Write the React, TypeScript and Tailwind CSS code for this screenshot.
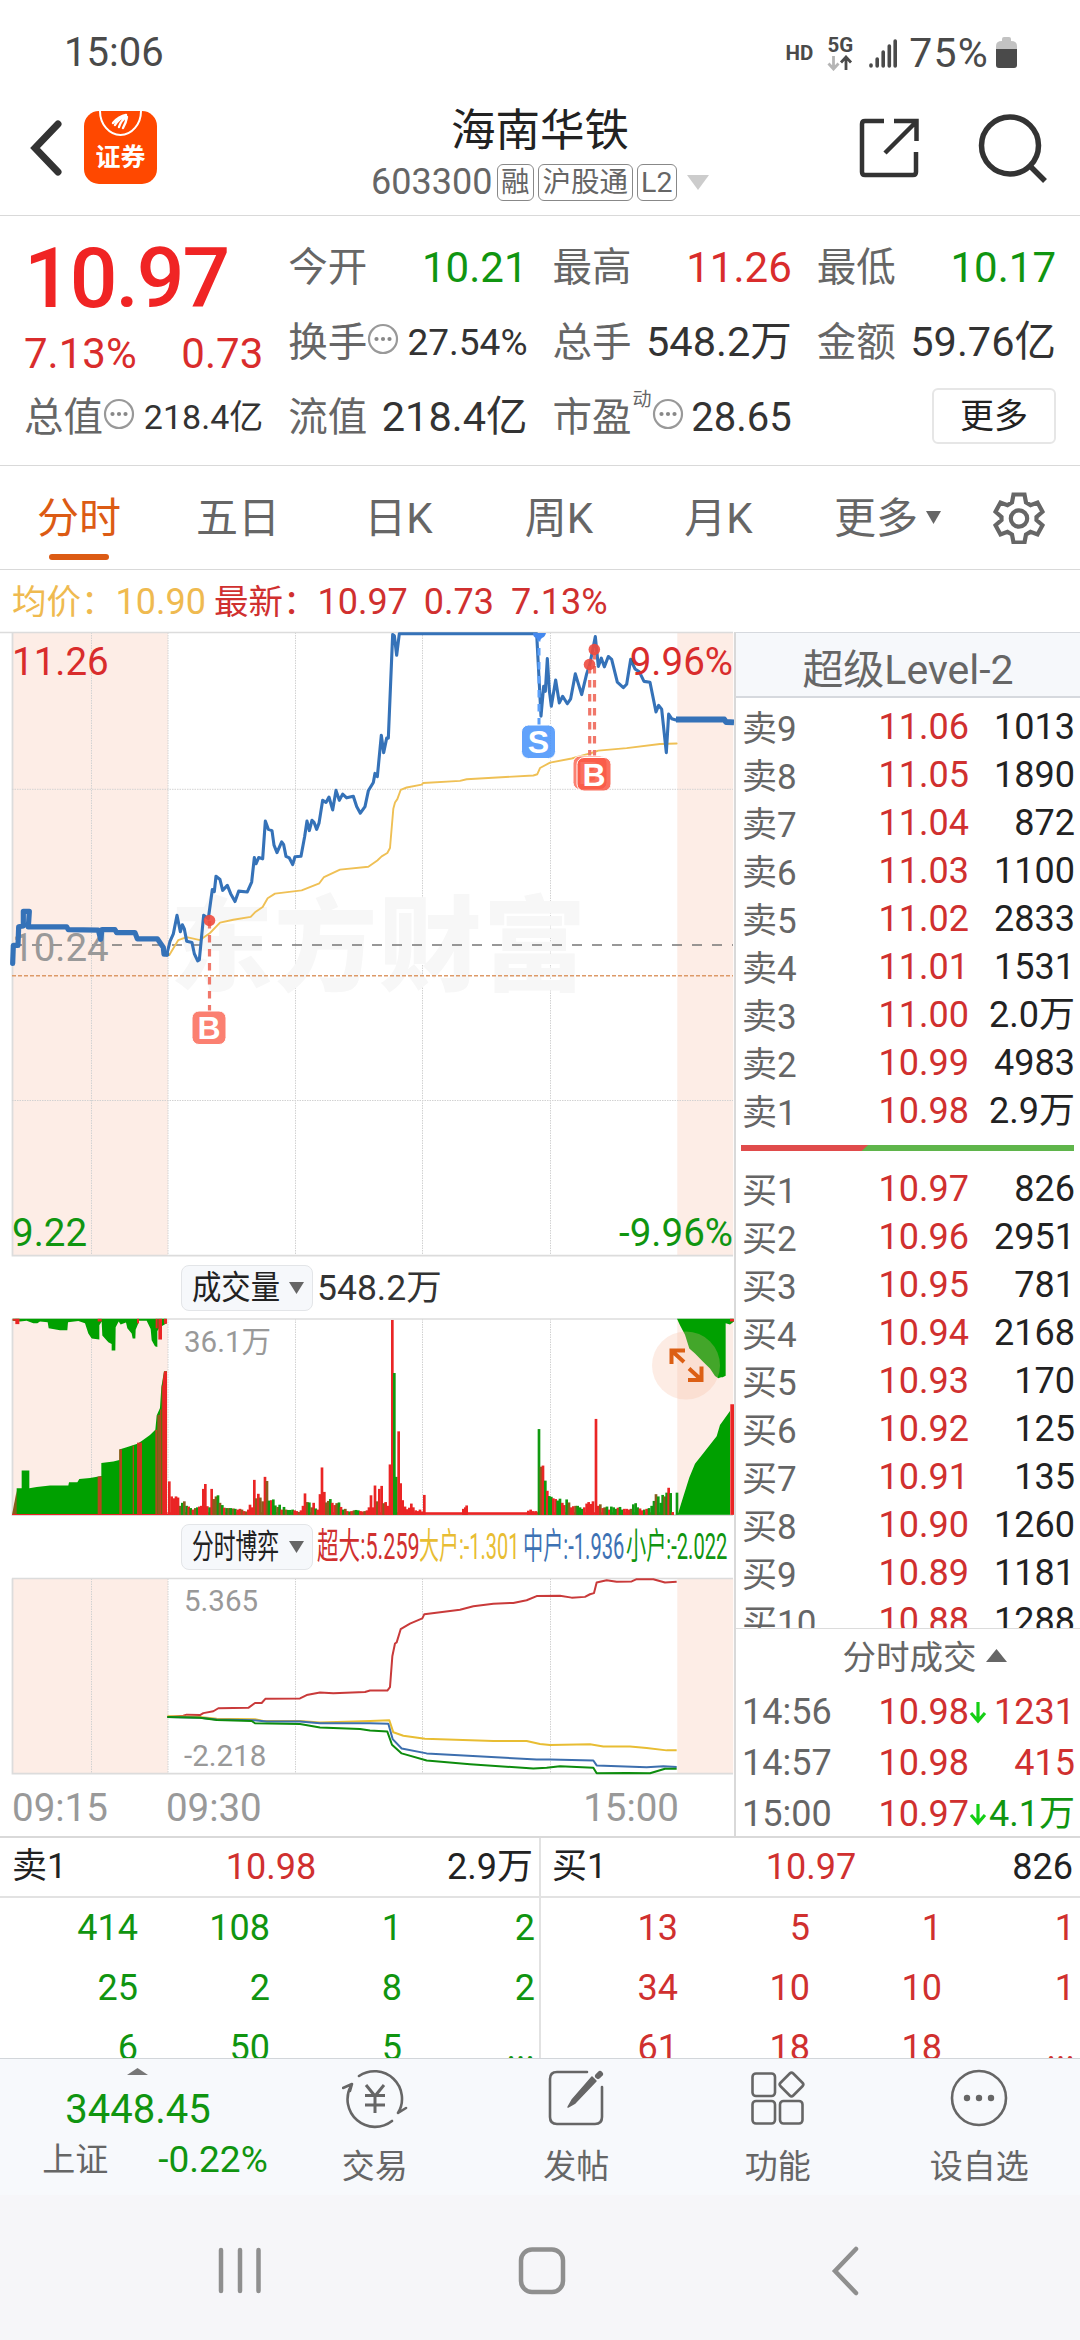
import type { ReactNode } from "react";

const FONT = "font-['Roboto','Noto_Sans_CJK_SC',sans-serif]";

/* ---------- chart data ---------- */

const PRICE_A =
  "500,808 510,775 520,757 531,712 541,752 547,735 553,745 560,775 576,778 583,805 593,822 598,820 611,712 625,720 637,650 643,655 648,618 660,626 668,652 682,640 692,660 705,679 716,654 742,656 755,632 763,573 768,588 776,573 788,576 796,485 805,505 816,508 822,543 831,561 845,535 851,542 858,570 868,574 878,590 885,571 903,570 914,522 921,485 928,508 936,483 942,488 950,505 957,490 968,435 978,440 987,427 998,458 1008,411 1018,435 1028,420 1040,429 1060,425 1070,450 1081,466 1095,450 1105,412 1120,392 1125,370 1132,378 1144,278 1151,320 1160,285 1165,285 1178,35 1183,38 1190,85 1198,33 1610,33 1623,232 1631,160 1636,172 1642,93 1648,170 1654,208 1667,145 1678,200 1688,184 1702,202 1712,190 1726,130 1745,180 1760,130 1770,105 1786,40 1795,112 1804,92 1813,113 1825,88 1835,95 1852,150 1870,163 1880,155 1892,95 1905,118 1918,125 1932,148 1950,150 1968,222 1976,206 1985,215 1999,320 2006,227 2015,238 2028,241";
const PRICE_PRE =
  "38,828 40,785 54,785 56,740 70,738 70,703 88,703 85,740 200,740 205,747 295,748 302,770 306,747 345,747 350,754 405,754 412,769 472,769 490,790 492,806 500,806";
const PRICE_POST = "2028,240 2173,240 2178,246 2202,247";
const AVG =
  "508,808 535,772 560,765 600,772 630,755 660,730 700,723 752,716 765,705 788,692 803,671 825,660 905,652 958,635 972,620 1020,602 1105,595 1132,580 1145,570 1162,562 1170,550 1180,455 1185,440 1192,432 1202,410 1220,404 1265,397 1270,393 1380,388 1400,384 1600,375 1612,372 1620,357 1650,344 1715,334 1770,322 1795,315 1880,309 1980,299 2030,298";

const FLOW_RED =
  "502,1241 550,1238 560,1235 600,1236 610,1231 640,1226 655,1218 745,1217 765,1204 785,1204 796,1193 900,1192 920,1183 960,1176 1000,1178 1095,1175 1110,1171 1162,1171 1170,1162 1177,1080 1185,1046 1190,1043 1202,1008 1230,993 1267,979 1273,968 1380,956 1420,947 1480,940 1540,938 1580,931 1610,920 1680,919 1715,924 1755,922 1770,915 1782,912 1790,884 1820,878 1850,882 1895,881 1910,875 1960,875 1995,884 2030,882";
const FLOW_YELLOW =
  "502,1239 600,1241 650,1246 765,1247 790,1252 900,1252 960,1256 1110,1252 1168,1250 1180,1282 1210,1291 1275,1299 1480,1305 1580,1305 1620,1313 1650,1316 1770,1314 1810,1320 1890,1320 1940,1324 2000,1330 2030,1330";
const FLOW_BLUE =
  "502,1241 600,1243 650,1248 760,1250 800,1253 900,1253 960,1258 1110,1258 1165,1259 1178,1300 1205,1325 1280,1338 1460,1347 1610,1354 1650,1354 1780,1357 1790,1370 1940,1375 1990,1372 2030,1374";
const FLOW_GREEN =
  "502,1241 600,1243 650,1249 755,1252 765,1258 900,1260 960,1269 1080,1273 1110,1277 1162,1280 1176,1315 1205,1338 1280,1357 1410,1367 1600,1378 1640,1376 1680,1372 1780,1376 1790,1391 1880,1390 1950,1391 1995,1379 2030,1379";

const R = "#ea2525";
const G = "#109a10";
const M = "#8a5c1c";

/* each bar: x, top, tone */
const VOLUME =
  "508,615,r 515,655,r 521,660,r 528,655,r 534,658,r 541,680,m 547,672,g 553,668,m 560,680,g 566,682,r 572,686,g 579,690,r 586,686,m 592,684,g 598,682,r 604,680,r 610,635,r 616,622,r 622,681,r 629,684,g 635,635,r 641,662,m 648,655,m 654,652,g 660,672,m 667,678,g 673,685,r 680,686,g 686,686,m 692,686,g 700,687,m 706,688,g 713,690,r 720,688,r 726,690,m 732,694,r 738,695,m 745,690,r 750,677,r 757,684,r 763,611,r 769,660,m 775,648,r 781,658,m 788,668,m 795,603,r 801,614,m 807,666,g 814,665,r 820,663,g 826,679,g 833,683,m 839,677,g 845,690,r 852,683,g 858,690,m 865,691,g 871,691,g 878,690,g 884,692,r 890,694,r 897,696,m 903,692,r 909,680,r 915,647,r 922,670,m 928,671,g 935,684,m 941,672,r 947,687,g 953,690,r 960,649,r 966,578,r 973,643,r 979,671,m 985,667,m 991,662,g 997,672,r 1004,678,r 1010,673,m 1017,671,g 1023,683,r 1030,690,g 1036,688,m 1042,694,r 1049,695,g 1055,694,r 1062,692,m 1068,691,g 1075,692,g 1081,694,r 1087,695,r 1094,694,m 1101,692,r 1107,684,r 1113,652,r 1119,684,r 1125,626,r 1132,668,m 1138,635,r 1145,627,r 1151,673,m 1157,670,r 1164,680,r 1170,570,r 1177,186,r 1183,327,g 1189,603,g 1196,482,r 1202,620,r 1208,665,r 1215,682,r 1221,689,r 1228,685,r 1234,674,r 1240,684,r 1247,692,r 1253,694,r 1260,690,r 1266,695,r 1273,651,r 1390,688,r 1396,684,r 1400,679,r 1585,693,r 1592,690,r 1600,694,r 1608,694,r 1617,476,g 1623,576,m 1629,573,r 1636,613,g 1642,640,r 1648,654,g 1654,656,g 1660,660,r 1667,662,r 1673,666,g 1680,661,g 1687,672,r 1693,678,r 1700,663,g 1707,671,m 1713,684,r 1720,681,r 1727,680,m 1733,680,g 1740,684,g 1746,688,g 1753,684,r 1760,674,r 1766,670,r 1772,675,r 1779,668,r 1788,449,r 1795,680,r 1801,676,m 1808,686,r 1814,684,m 1821,682,g 1828,690,r 1834,682,g 1841,684,g 1847,688,g 1854,685,r 1860,683,g 1867,690,g 1873,688,r 1880,688,r 1886,690,r 1893,688,m 1900,676,g 1907,673,g 1913,684,g 1920,687,r 1927,692,r 1933,690,g 1940,688,r 1947,686,g 1955,680,g 1962,667,g 1968,649,m 1975,655,g 1982,672,g 1988,651,g 1994,655,m 2000,645,g 2006,632,r 2012,646,g 2018,697,r 2031,645,g"
    .split(" ")
    .map((s) => s.split(","));

const tone: Record<string, string> = { r: R, g: G, m: M };

/* ---------- order book ---------- */

const SELLS = [
  ["卖9", "11.06", "1013"],
  ["卖8", "11.05", "1890"],
  ["卖7", "11.04", "872"],
  ["卖6", "11.03", "1100"],
  ["卖5", "11.02", "2833"],
  ["卖4", "11.01", "1531"],
  ["卖3", "11.00", "2.0万"],
  ["卖2", "10.99", "4983"],
  ["卖1", "10.98", "2.9万"],
];
const BUYS = [
  ["买1", "10.97", "826"],
  ["买2", "10.96", "2951"],
  ["买3", "10.95", "781"],
  ["买4", "10.94", "2168"],
  ["买5", "10.93", "170"],
  ["买6", "10.92", "125"],
  ["买7", "10.91", "135"],
  ["买8", "10.90", "1260"],
  ["买9", "10.89", "1181"],
  ["买10", "10.88", "1288"],
];

function BookRow({ row }: { row: string[] }) {
  return (
    <div className="flex h-12 shrink-0 items-center text-[36px] leading-[48px]">
      <span className="mt-[6px] w-[110px] text-[35px] text-[#666]">{row[0]}</span>
      <span className="w-[117px] text-right text-[#d0302f]">{row[1]}</span>
      <span className="flex-1 text-right text-[#222]">{row[2]}</span>
    </div>
  );
}

function TradeRow({ time, price, vol, down, green }: { time: string; price: string; vol: string; down?: boolean; green?: boolean }) {
  return (
    <div className="flex h-[50.7px] items-center text-[36px] leading-[50px]">
      <span className="w-[110px] text-[#666]">{time}</span>
      <span className="w-[117px] text-right text-[#d0302f]">{price}</span>
      <span className="w-[18px] shrink-0">
        {down && (
          <svg viewBox="0 0 18 24" className="h-6 w-[18px]" fill="none" stroke="#14cf14" strokeWidth="3.2">
            <path d="M9 2v19M2 13l7 8 7-8" />
          </svg>
        )}
      </span>
      <span className={green ? "flex-1 text-right text-[#109510]" : "flex-1 text-right text-[#d0302f]"}>{vol}</span>
    </div>
  );
}

function Dots() {
  return (
    <svg viewBox="0 0 32 32" className="mb-2 h-8 w-8 shrink-0" fill="none" stroke="#999" strokeWidth="2.2">
      <circle cx="16" cy="16" r="14" />
      <g fill="#888" stroke="none">
        <circle cx="9.5" cy="16" r="2.1" />
        <circle cx="16" cy="16" r="2.1" />
        <circle cx="22.5" cy="16" r="2.1" />
      </g>
    </svg>
  );
}

function Stat({ label, icon, children, cls }: { label: string; icon?: ReactNode; children: ReactNode; cls: string }) {
  return (
    <div className="flex h-[75px] items-center whitespace-nowrap">
      <span className="text-[39.5px] text-[#666]">{label}</span>
      {icon}
      <span className={"ml-auto " + cls}>{children}</span>
    </div>
  );
}

function GridLines({ top, bottom, left = 12 }: { top: number; bottom: number; left?: number }) {
  return (
    <>
      <rect x="12" y={top} width="156" height={bottom - top} fill="#fdede6" />
      <rect x="677.3" y={top} width="56" height={bottom - top} fill="#fdede6" />
      <g stroke="#d2d2d2" strokeWidth="1" strokeDasharray="1.5 1">
        {[91.5, 168, 295.5, 422.5, 550.5].map((x) => (
          <path key={x} d={`M${x} ${top}V${bottom}`} />
        ))}
      </g>
      <path d={`M${left} ${top}H733`} stroke="#dcdcdc" strokeWidth="1.5" />
      <path d={`M12.5 ${top}V${bottom}H733`} fill="none" stroke="#dcdcdc" strokeWidth="1.8" />
    </>
  );
}

function Marker({ x, y, letter, color }: { x: number; y: number; letter: string; color: string }) {
  return (
    <g>
      <rect x={x} y={y} width="34" height="33.5" rx="7" fill={color} stroke="#fff" strokeWidth="1" fillOpacity="0.85" />
      <text x={x + 17} y={y + 28} textAnchor="middle" fontSize="32" fontWeight="700" fill="#fff" className="font-['Liberation_Sans',sans-serif]">
        {letter}
      </text>
    </g>
  );
}

function PriceChart() {
  return (
    <svg viewBox="0 632 734 625" className="block h-[625px] w-[734px] shrink-0 overflow-visible">
      <GridLines top={632.5} bottom={1255.7} left={0} />
      <g stroke="#d2d2d2" strokeDasharray="1.5 1">
        <path d="M12 789.3H733" />
        <path d="M12 1100.5H733" />
      </g>
      <text x="170" y="983" fontSize="103" fontWeight="900" textLength="416" fill="#f7f7f7">
        东方财富
      </text>
      <path d="M12 945H733" stroke="#777" strokeWidth="1.6" strokeDasharray="10 10" />
      <path d="M12 975.8H733" stroke="#dd9a68" strokeWidth="1.6" strokeDasharray="4 2" />
      <text x="12" y="960.5" fontSize="38.5" fill="#999">10.24</text>
      <g transform="translate(0 620) scale(0.33333 0.4146)" fill="none" strokeLinejoin="round" strokeLinecap="round">
        <polyline points={AVG} stroke="#efc055" strokeWidth="1.9" vectorEffect="non-scaling-stroke" />
        <polyline points={PRICE_A} stroke="#3572b8" strokeWidth="3.1" vectorEffect="non-scaling-stroke" />
        <polyline points={PRICE_PRE} stroke="#3572b8" strokeWidth="5.2" vectorEffect="non-scaling-stroke" />
        <polyline points={PRICE_POST} stroke="#3572b8" strokeWidth="5.8" strokeLinecap="butt" vectorEffect="non-scaling-stroke" />
      </g>
      <g stroke="#f0776a" strokeWidth="3.2" strokeDasharray="7.5 6.5">
        <path d="M209.5 921V1011" />
        <path d="M589.7 666V756" />
        <path d="M594.5 652V756" />
      </g>
      <path d="M539 634V725" stroke="#5b9ff9" strokeWidth="3" strokeDasharray="7.5 6.5" />
      <path d="M533 633h13q-1 4-4 5l-3 3-3-3q-3-1-3-5z" fill="#4488ee" />
      <g fill="#ee4a3e" fillOpacity="0.9">
        <circle cx="209.5" cy="920.5" r="5.8" />
        <circle cx="589.5" cy="664.5" r="5.8" />
        <circle cx="594.3" cy="649.5" r="5.8" />
      </g>
      <Marker x={192} y={1011} letter="B" color="#fa6a58" />
      <Marker x={521.5} y={725} letter="S" color="#4592fa" />
      <Marker x={573} y={756} letter="B" color="#fa6a58" />
      <Marker x={577} y={757.5} letter="B" color="#f95743" />
      <g fontSize="38.5">
        <text x="12" y="674.5" fill="#d92c2c">11.26</text>
        <text x="12" y="1245.5" fill="#109510">9.22</text>
        <text x="733" y="674.5" textAnchor="end" fill="#d92c2c">9.96%</text>
        <text x="733" y="1245.5" textAnchor="end" fill="#109510">-9.96%</text>
      </g>
    </svg>
  );
}

function VolumeChart() {
  return (
    <svg viewBox="0 1318 734 198" className="block h-[198px] w-[734px] shrink-0 overflow-visible">
      <GridLines top={1319} bottom={1515} />
      <g transform="translate(0 1250) scale(0.33333 0.37622)">
        <path d="M36 704L50 640 54 704z" fill={M} />
        <path
          fill="#00a000"
          d="M50 704V633H65V586H88V633L110 630 150 626H205L207 617H232L238 609 270 606 304 601V566L340 562 358 558V530L380 524 412 515 425 508 450 492 466 478 470 440 480 420 484 365 492 322H501V704z"
        />
        <g fill="#b3471d">
          <rect x="293" y="602" width="12" height="102" />
          <rect x="358" y="530" width="8" height="174" />
          <rect x="398" y="520" width="4" height="184" />
          <rect x="466" y="478" width="6" height="226" />
          <rect x="472" y="438" width="8" height="266" fill="#8f5a1c" />
          <rect x="480" y="424" width="4" height="280" />
          <rect x="485" y="360" width="4" height="344" />
        </g>
        <rect x="411" y="512" width="15" height="192" fill={R} fillOpacity="0.85" />
        <path d="M488 704V350L492 322H501V704z" fill={R} />
        <path
          fill="#00a000"
          d="M38 183V188L60 190 80 188 100 195H112L120 190 143 192 146 208 180 213H202L204 192 235 189 255 195 265 222 275 235 298 238V200L305 190 307 227 325 245 335 250V267H346L347 205 356 190 362 198 378 193 382 208 395 222 398 235H406L407 212 415 195V188H440L452 210 455 240 465 256 472 258V215L480 205 500 195V183z"
        />
        <g fill={R}>
          <rect x="46" y="183" width="12" height="14" />
          <rect x="38" y="183" width="20" height="5" />
          <rect x="293" y="183" width="12" height="7" />
          <rect x="411" y="183" width="6" height="12" />
          <rect x="467" y="183" width="6" height="25" />
          <rect x="475" y="183" width="11" height="55" />
          <rect x="492" y="183" width="9" height="13" />
        </g>
        <rect x="502" y="697" width="1520" height="7" fill={R} />
        {VOLUME.map(([x, y, c]) => (
          <rect key={x} x={Number(x) - 4} y={y} width="8" height={704 - Number(y)} fill={tone[c]} />
        ))}
        <path
          fill="#00a000"
          d="M2031 183L2040 200 2055 225 2068 262 2085 275 2110 298 2130 315 2145 335 2155 341 2163 338H2168L2177 334V195L2190 198 2202 190V183z"
        />
        <rect x="2190" y="183" width="12" height="7" fill={R} />
        <path fill="#00a000" d="M2033 704L2050 655 2068 605 2085 568 2110 540 2150 495 2160 465 2190 428V704z" />
        <rect x="2191" y="410" width="12" height="294" fill={R} />
        <path d="M36 703H504" stroke={R} strokeWidth="3" />
      </g>
      <text x="184" y="1352" fontSize="29.5" fill="#999">36.1万</text>
      <circle cx="686" cy="1365.5" r="34" fill="#f9b79a" fillOpacity="0.27" />
      <g fill="none" stroke="#dc5f14" strokeWidth="4">
        <path d="M685 1350.500H671.500V1364M672 1351l12 11" />
        <path d="M688 1380H701.500V1366.500M701 1379.500l-12-11" />
      </g>
    </svg>
  );
}

function FlowChart() {
  return (
    <svg viewBox="0 1577 734 198" className="block h-[198px] w-[734px] shrink-0 overflow-visible">
      <GridLines top={1578.5} bottom={1773.7} />
      <g transform="translate(0 1250) scale(0.33333 0.37622)" fill="none" strokeLinejoin="round">
        <polyline points={FLOW_RED} stroke="#c93a3a" strokeWidth="2" vectorEffect="non-scaling-stroke" />
        <polyline points={FLOW_YELLOW} stroke="#e8bd33" strokeWidth="2" vectorEffect="non-scaling-stroke" />
        <polyline points={FLOW_BLUE} stroke="#3d6fae" strokeWidth="2" vectorEffect="non-scaling-stroke" />
        <polyline points={FLOW_GREEN} stroke="#0d8c0d" strokeWidth="2" vectorEffect="non-scaling-stroke" />
      </g>
      <g fontSize="29.5" fill="#999">
        <text x="184" y="1611">5.365</text>
        <text x="184" y="1765.5">-2.218</text>
      </g>
    </svg>
  );
}

function Picker({ label, squeeze }: { label: string; squeeze: string }) {
  return (
    <div className="ml-[181px] flex h-[46px] w-[132px] shrink-0 items-center rounded-lg border border-[#e3e5e8] bg-[#f6f8fb] pl-[10px]">
      <span className="w-[88px] text-[33px] leading-[44px] whitespace-nowrap text-[#222]">
        <span className={"inline-block origin-left " + squeeze}>{label}</span>
      </span>
      <svg viewBox="0 0 14 12" className="ml-[9px] h-3 w-[15px]" fill="#666" preserveAspectRatio="none">
        <path d="M0 0h14L7 12z" />
      </svg>
    </div>
  );
}

function Squeezed({ cls, children }: { cls: string; children: string }) {
  return <span className={"block origin-left text-[36px] whitespace-nowrap " + cls}>{children}</span>;
}

function QueueHalf({ name, price, vol, rows, color }: { name: string; price: string; vol: string; rows: string[][]; color: string }) {
  return (
    <div className="w-[540px] overflow-hidden">
      <div className="grid h-[60px] grid-cols-[171px_176px_1fr] items-center border-b-2 border-[#e2e2e2] pr-[7px] pl-3 text-[36px] leading-[56px] text-[#222]">
        <span className="text-[35px]">{name}</span>
        <span className="text-center text-[#d0302f]">{price}</span>
        <span className="text-right">{vol}</span>
      </div>
      {rows.map((r, i) => (
        <div key={i} className={"grid h-[60px] grid-cols-[138px_132px_132px_133px] text-right text-[36px] leading-[60px] " + color}>
          {r.map((v, j) => (
            <span key={j}>{v}</span>
          ))}
        </div>
      ))}
    </div>
  );
}

function NavItem({ label, children }: { label: string; children: ReactNode }) {
  return (
    <div className="flex w-[201.5px] flex-col items-center pt-[8px]">
      <svg viewBox="0 0 66 62" className="h-[62px] w-[66px]" fill="none" stroke="#666" strokeWidth="2.6" strokeLinecap="round" strokeLinejoin="round">
        {children}
      </svg>
      <span className="mt-4 text-[33px] leading-[44px] text-[#666]">{label}</span>
    </div>
  );
}

function Tag({ children }: { children: string }) {
  return (
    <span className="ml-[4px] flex h-[37px] items-center rounded-md border border-[#888] px-[3.5px] text-[28.5px] leading-[35px] text-[#666]">{children}</span>
  );
}

export default function App() {
  return (
    <div className={"flex h-[2340px] w-[1080px] flex-col overflow-hidden bg-white " + FONT}>
      {/* status bar */}
      <div className="flex h-20 shrink-0 items-start pt-[29px] pr-[63px] pl-[64px] text-[#4a4a4a]">
        <span className="text-[40px] leading-[48px]">15:06</span>
        <div className="ml-auto flex h-12 items-center">
          <span className="text-[20.5px] font-bold">HD</span>
          <div className="ml-[14px] flex flex-col items-center">
            <span className="h-[19px] text-[20.5px] leading-[19px] font-bold">5G</span>
            <svg viewBox="0 0 26 16" className="h-4 w-[26px]" fill="none" strokeWidth="2.8">
              <path d="M6.500 1v13M1.500 8.500l5 5.500 5-5.500" stroke="#b5b5b5" />
              <path d="M19 15V2M14 7.500l5-5.500 5 5.500" stroke="#4a4a4a" />
            </svg>
          </div>
          <svg viewBox="0 0 28 32" className="ml-[16px] h-8 w-7" stroke="#4a4a4a" strokeWidth="3.6" strokeLinecap="round">
            <path d="M2 29v-1M8.200 29v-7M14.200 29V15M20.300 29V9M26.200 29V4" />
          </svg>
          <span className="ml-[12px] text-[41px] leading-[48px] tracking-[1.2px]">75%</span>
          <svg viewBox="0 0 21 32" className="ml-[7px] h-8 w-[21px]">
            <path d="M6 4V2q0-2 2-2h5q2 0 2 2v2q6 0 6 5v4H0V9q0-5 6-5z" fill="#c2c2c2" />
            <path d="M0 12h21v16q0 3-3 3H3q-3 0-3-3z" fill="#4a4a4a" />
          </svg>
        </div>
      </div>

      {/* title bar */}
      <div className="grid h-[136px] shrink-0 grid-cols-[360px_1fr_360px] border-b border-[#d9d9d9]">
        <div className="flex items-center pl-[29px]">
          <svg viewBox="0 0 34 56" className="h-14 w-[34px]" fill="none" stroke="#333" strokeWidth="7" strokeLinecap="round" strokeLinejoin="miter">
            <path d="M29 4L6 28l23 24" />
          </svg>
          <div className="relative ml-[21px] flex h-[73px] w-[73px] items-end justify-center overflow-hidden rounded-[15px] bg-[#ff4800]">
            <svg viewBox="0 0 73 73" className="absolute inset-0 h-full w-full" fill="none" stroke="#fff">
              <path d="M16 0a20.500 24 0 0 0 41 0" strokeWidth="2" />
              <path d="M29 12q6-7 13-8M31 14q4-7 11-9M35 16q2-7 8-10M39 17q3-5 4-11" strokeWidth="2.4" strokeLinecap="round" />
            </svg>
            <span className="mb-[9px] text-[25px] leading-[34px] font-bold text-white">证券</span>
          </div>
        </div>
        <div className="flex flex-col items-center pt-[27px]">
          <span className="text-[44.5px] leading-[48px] text-[#222]">海南华铁</span>
          <div className="mt-[5px] flex h-11 items-center whitespace-nowrap">
            <span className="text-[36px] leading-[44px] text-[#666]">603300</span>
            <Tag>融</Tag>
            <Tag>沪股通</Tag>
            <Tag>L2</Tag>
            <svg viewBox="0 0 22 15" className="ml-[10px] h-[15px] w-[22px]" fill="#ccc">
              <path d="M0 0h22L11 15z" />
            </svg>
          </div>
        </div>
        <div className="flex items-center justify-end gap-[58px] pr-[31px]">
          <svg viewBox="0 0 62 62" className="h-[62px] w-[62px]" fill="none" stroke="#333" strokeWidth="4.5">
            <path d="M27 4H8Q5 4 5 7V55q0 3 3 3H56q3 0 3-3V35" />
            <path d="M37 4H59.500V24M58 6L28 36" />
          </svg>
          <svg viewBox="0 0 72 72" className="h-[72px] w-[72px]" fill="none" stroke="#333" strokeWidth="5.5">
            <circle cx="33" cy="33.5" r="28.5" />
            <path d="M54 55L68 69" />
          </svg>
        </div>
      </div>

      {/* quote summary */}
      <div className="grid h-[250px] shrink-0 grid-cols-4 gap-x-[25px] border-b border-[#d9d9d9] px-6 pt-[14px]">
        <div>
          <div className="flex h-[98px] items-center text-[84px] leading-[98px] font-medium tracking-[-2px] text-[#f02424]">10.97</div>
          <div className="flex h-[52px] items-center justify-between text-[42px] leading-[52px] text-[#d92c2c]">
            <span>7.13%</span>
            <span>0.73</span>
          </div>
          <Stat label="总值" icon={<Dots />} cls="text-[34px] text-[#333]">218.4亿</Stat>
        </div>
        <div>
          <Stat label="今开" cls="text-[42px] text-[#109510]">10.21</Stat>
          <Stat label="换手" icon={<Dots />} cls="text-[37px] text-[#333]">27.54%</Stat>
          <Stat label="流值" cls="text-[41.5px] text-[#333]">218.4亿</Stat>
        </div>
        <div>
          <Stat label="最高" cls="text-[42px] text-[#d92c2c]">11.26</Stat>
          <Stat label="总手" cls="text-[41.5px] text-[#333]">548.2万</Stat>
          <Stat
            label="市盈"
            icon={
              <>
                <span className="mb-9 ml-[1px] text-[19px] leading-5 text-[#666]">动</span>
                <Dots />
              </>
            }
            cls="text-[40px] text-[#333]"
          >
            28.65
          </Stat>
        </div>
        <div>
          <Stat label="最低" cls="text-[42px] text-[#109510]">10.17</Stat>
          <Stat label="金额" cls="text-[41.5px] text-[#333]">59.76亿</Stat>
          <div className="flex h-[71px] items-center justify-end">
            <span className="flex h-[56px] w-[124px] items-center justify-center rounded-md border-2 border-[#e6e6e6] text-[34px] leading-[50px] text-[#222]">更多</span>
          </div>
        </div>
      </div>

      {/* period tabs */}
      <div className="flex h-[104px] shrink-0 items-center border-b border-[#d9d9d9] text-[42px] leading-[60px] text-[#666]">
        <div className="relative flex w-[158px] justify-center pt-[3px] text-[#dc5b14]">
          分时
          <span className="absolute top-[68px] left-[49px] h-[6px] w-[60px] rounded-full bg-[#dc5b14]" />
        </div>
        <div className="w-[160px] pt-[3px] text-center">五日</div>
        <div className="w-[161px] pt-[3px] text-center">日K</div>
        <div className="w-[160px] pt-[3px] text-center">周K</div>
        <div className="w-[159px] pt-[3px] text-center">月K</div>
        <div className="flex w-[180px] items-center pl-[36px]">
          <span className="pt-[3px]">更多</span>
          <svg viewBox="0 0 15 13" className="ml-[8px] h-[13px] w-[15px]" fill="#666">
            <path d="M0 0h15L7.500 13z" />
          </svg>
        </div>
        <svg viewBox="0 0 52 52" className="ml-[15px] h-[52px] w-[52px]" fill="none" stroke="#666" strokeWidth="4.2">
          <path d="M20.500 2.500h11l1.500 8 4.500 2.600 7-2.600 5 9.200-6 5.300v3l6 5.300-5 9.200-7-2.600-4.500 2.600-1.500 8h-11l-1.500-8-4.500-2.600-7 2.600-5-9.200 6-5.300v-3l-6-5.300 5-9.200 7 2.600 4.500-2.600z" />
          <circle cx="26" cy="26.5" r="8.2" />
        </svg>
      </div>

      {/* average / latest */}
      <div className="flex h-[62px] shrink-0 items-center pt-[2px] pl-3 text-[36px] leading-[60px] whitespace-nowrap text-[#d0302f]">
        <span className="text-[#efba50]">
          <span className="text-[34.5px]">均价：</span>10.90
        </span>
        <span className="ml-[8px]">
          <span className="text-[34.5px]">最新：</span>10.97
        </span>
        <span className="ml-[16px]">0.73</span>
        <span className="ml-[17px]">7.13%</span>
      </div>

      {/* charts + order book */}
      <div className="flex h-[1206px] shrink-0 border-b-2 border-[#d9d9d9]">
        <div className="flex w-[734px] shrink-0 flex-col">
          <PriceChart />
          <div className="flex h-[61px] shrink-0 items-center">
            <Picker label="成交量" squeeze="scale-x-[0.89]" />
            <span className="ml-[4px] text-[35.5px] leading-[56px] text-[#333]">548.2万</span>
          </div>
          <VolumeChart />
          <div className="flex h-[61px] shrink-0 items-center">
            <Picker label="分时博弈" squeeze="scale-x-[0.66]" />
            <div className="ml-[4px] flex">
              <Squeezed cls="w-[102px] scale-x-[0.6] text-[#d0302f]">超大:5.259</Squeezed>
              <Squeezed cls="w-[104px] scale-x-[0.555] text-[#e8bd33]">大户:-1.301</Squeezed>
              <Squeezed cls="w-[103px] scale-x-[0.56] text-[#3d72b4]">中户:-1.936</Squeezed>
              <Squeezed cls="w-[100px] scale-x-[0.56] text-[#109510]">小户:-2.022</Squeezed>
            </div>
          </div>
          <FlowChart />
          <div className="flex h-[62px] items-center pt-1 pl-3 text-[38.5px] leading-[50px] text-[#999]">
            <span>09:15</span>
            <span className="ml-[58px]">09:30</span>
            <span className="ml-auto pr-[55px]">15:00</span>
          </div>
        </div>

        <div className="flex flex-1 flex-col border-l-2 border-[#d9d9d9]">
          <div className="flex h-[66px] shrink-0 items-center justify-center border-t border-b-2 border-[#d6d9de] bg-[#f6f8fb] pt-[10px] text-[41px] leading-[54px] text-[#666]">
            超级Level-2
          </div>
          <div className="shrink-0 pt-[5px] pr-[5px] pl-[6px]">
            {SELLS.map((r) => (
              <BookRow key={r[0]} row={r} />
            ))}
          </div>
          <div className="mt-[10px] mr-[6px] ml-[5px] flex h-[6px] shrink-0 bg-[#5fb54b]">
            <span className="w-[127px] bg-[#e04b4b] [clip-path:polygon(0_0,100%_0,95%_100%,0_100%)]" />
          </div>
          <div className="mt-[14px] h-[463px] shrink-0 overflow-hidden pr-[5px] pl-[6px]">
            {BUYS.map((r) => (
              <BookRow key={r[0]} row={r} />
            ))}
          </div>
          <div className="flex h-[59px] shrink-0 items-center justify-center gap-[9px] border-t border-[#dcdcdc] pb-[1px] pl-[33px] text-[33.5px] leading-[50px] text-[#666]">
            <span>分时成交</span>
            <svg viewBox="0 0 21 13" className="mb-[4px] h-[13px] w-[21px]" fill="#666">
              <path d="M10.500 0L21 13H0z" />
            </svg>
          </div>
          <div className="pr-[5px] pl-[6px]">
            <TradeRow time="14:56" price="10.98" vol="1231" down />
            <TradeRow time="14:57" price="10.98" vol="415" />
            <TradeRow time="15:00" price="10.97" vol="4.1万" down green />
          </div>
        </div>
      </div>

      {/* queue tables */}
      <div className="flex h-[221px] shrink-0 overflow-hidden border-b border-[#d2d6da]">
        <QueueHalf
          name="卖1"
          price="10.98"
          vol="2.9万"
          color="text-[#109510]"
          rows={[
            ["414", "108", "1", "2"],
            ["25", "2", "8", "2"],
            ["6", "50", "5", "..."],
          ]}
        />
        <div className="-ml-px w-[2px] shrink-0 bg-[#e2e2e2]" />
        <div className="-ml-px">
          <QueueHalf
            name="买1"
            price="10.97"
            vol="826"
            color="text-[#d0302f]"
            rows={[
              ["13", "5", "1", "1"],
              ["34", "10", "10", "1"],
              ["61", "18", "18", "..."],
            ]}
          />
        </div>
      </div>

      {/* bottom actions */}
      <div className="flex h-[136px] shrink-0 bg-[#f7f9fc]">
        <div className="flex w-[274px] flex-col items-center pt-[9px]">
          <svg viewBox="0 0 21 7" className="h-[7px] w-[21px]" fill="#777">
            <path d="M10.500 0L21 7H0z" />
          </svg>
          <span className="mt-[11px] pl-[2px] text-[40px] leading-[48px] text-[#109510]">3448.45</span>
          <div className="mt-[2px] flex items-center gap-[50px] pl-9 leading-[48px]">
            <span className="text-[33px] text-[#666]">上证</span>
            <span className="text-[37px] text-[#109510]">-0.22%</span>
          </div>
        </div>
        <NavItem label="交易">
          <path d="M17 9A27.500 27.500 0 0 1 56 46l8-5M9 19A27.500 27.500 0 0 0 50 54M1 21L10 17 8 24" />
          <path d="M24 18l9 11 9-11M23 28.500H43M23 38H43M33 29V46" strokeWidth="3" strokeLinecap="butt" />
        </NavItem>
        <NavItem label="发帖">
          <path d="M44 5H14q-7 0-7 7V50q0 7 7 7H52q7 0 7-7V20" />
          <path d="M49 10L29 33 25 40 32 36 53 14z" fill="#666" strokeWidth="1.5" />
          <path d="M55 9L57 7" strokeWidth="6" />
        </NavItem>
        <NavItem label="功能">
          <rect x="7.5" y="6.5" width="22.5" height="22.5" rx="3.5" />
          <rect x="7.5" y="34" width="22.5" height="22.5" rx="3.5" />
          <rect x="35" y="34" width="22.5" height="22.5" rx="3.5" />
          <rect x="37.5" y="8.5" width="18" height="18" rx="2.5" transform="rotate(45 46.5 17.5)" />
        </NavItem>
        <NavItem label="设自选">
          <circle cx="33" cy="31" r="27" />
          <g fill="#666" stroke="none">
            <circle cx="21" cy="31" r="3.2" />
            <circle cx="33" cy="31" r="3.2" />
            <circle cx="45" cy="31" r="3.2" />
          </g>
        </NavItem>
      </div>

      {/* system navigation */}
      <div className="flex flex-1 items-start justify-between bg-[#f6f6f9] pt-[50px] pr-[220px] pl-[217px]">
        <svg viewBox="0 0 46 52" className="h-[52px] w-[46px]" stroke="#8f8f8f" strokeWidth="4.5" strokeLinecap="round">
          <path d="M4 5V46M23 5V46M41.500 5V46" />
        </svg>
        <svg viewBox="0 0 50 52" className="-ml-[9px] h-[52px] w-[50px]" fill="none" stroke="#8f8f8f" strokeWidth="4.5">
          <rect x="4" y="4.5" width="42" height="42.5" rx="11" />
        </svg>
        <svg viewBox="0 0 30 52" className="h-[52px] w-[30px]" fill="none" stroke="#8f8f8f" strokeWidth="4.5" strokeLinecap="round">
          <path d="M26 4L5 26l21 22" />
        </svg>
      </div>
    </div>
  );
}
